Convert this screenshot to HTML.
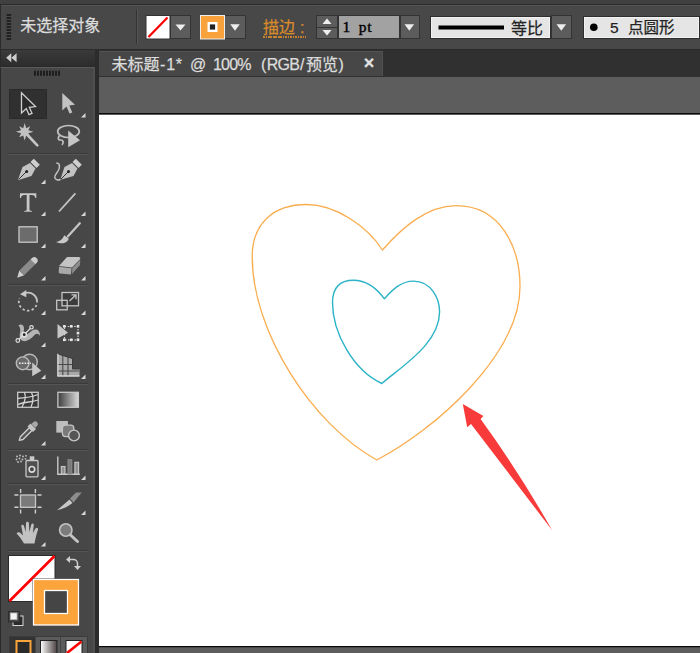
<!DOCTYPE html>
<html lang="zh-CN">
<head>
<meta charset="utf-8">
<title>未标题-1</title>
<style>
html,body{margin:0;padding:0;}
body{-webkit-text-stroke:0.25px;width:700px;height:653px;overflow:hidden;position:relative;background:#5d5d5d;font-family:"Liberation Sans","Noto Sans CJK SC",sans-serif;}
.abs{position:absolute;}
#topbar{left:0;top:0;width:700px;height:49px;background:#484848;}
#topstrip{left:0;top:0;width:700px;height:4px;background:#404040;border-bottom:1px solid #2b2b2b;}
#tophl{left:0;top:5px;width:700px;height:1px;background:#545454;}
#topleft{left:0;top:5px;width:1px;height:44px;background:#2b2b2b;}
#topline{left:0;top:49px;width:700px;height:2px;background:#2b2b2b;}
#tabbar{left:96px;top:50px;width:604px;height:27px;background:#303030;}
#tab{left:98.600px;top:51px;width:284.400px;height:25px;background:#474747;border-top:1px solid #525252;border-right:1px solid #505050;box-sizing:border-box;}
#tabtext{left:111.5px;top:55.300px;width:240px;height:20px;font-size:16px;line-height:20px;color:#dcdcdc;white-space:nowrap;}
#tabtext span{position:absolute;top:0;}
#tabclose{left:360.600px;top:53px;width:17px;font-size:18px;font-weight:bold;line-height:20px;color:#e2e2e2;text-align:center;}
#paste{left:98.600px;top:77px;width:602px;height:576px;background:#5d5d5d;}
#canvas{left:99px;top:115px;width:601px;height:531px;background:#fff;}
#cvtop{left:97px;top:113px;width:603px;height:1px;background:#0a0a0a;border-bottom:1px solid #5a5a5a;}
#cvleft{left:97px;top:113px;width:1px;height:535px;background:#0a0a0a;border-right:1px solid #6a6a6a;}
#cvbot{left:97px;top:646px;width:603px;height:1px;background:#0a0a0a;border-bottom:1px solid #484848;}
#gap{left:95px;top:50px;width:3.600px;height:603px;background:#2b2b2b;}
#tools{left:0;top:67px;width:95px;height:586px;background:#474747;border-left:1px solid #2a2a2a;border-right:2px solid #4f4f4f;border-top:1px solid #5a5a5a;box-sizing:border-box;}
#toolhead{left:0;top:50px;width:95px;height:17px;background:linear-gradient(#3a3a3a,#2e2e2e 85%,#292929);border-left:1px solid #2a2a2a;box-sizing:border-box;}
#sel{left:9px;top:89px;width:37.500px;height:29.500px;background:#303030;border:1px solid #2a2a2a;box-sizing:border-box;}
.sep{left:8px;width:80px;height:1px;background:#3a3a3a;border-bottom:1px solid #555;}
#nosel{left:20.300px;top:14.600px;font-size:16px;line-height:22px;color:#dcdcdc;white-space:nowrap;}
#miaobian{left:263px;top:17px;font-size:16px;line-height:22px;color:#d98a2b;white-space:nowrap;height:21px;word-spacing:0.5px;padding-right:2px;background:repeating-linear-gradient(90deg,#c9822c 0,#c9822c 1.500px,transparent 1.500px,transparent 2.500px) left bottom/100% 2px no-repeat;}
.btn{background:#5c5c5c;border:1px solid #333;box-sizing:border-box;}
#ptfield{left:338px;top:15px;width:62px;height:24px;background:#a2a2a2;border:1px solid #333;box-sizing:border-box;}
#pttext{left:342.500px;top:15.500px;font-family:"Liberation Serif","Noto Serif CJK SC",serif;font-size:15.500px;letter-spacing:0.700px;word-spacing:3.300px;-webkit-text-stroke:0.400px;line-height:22px;color:#000;white-space:pre;}
#profile{left:430px;top:16px;width:121px;height:23px;background:#e5e5e5;border:1px solid #2e2e2e;box-sizing:border-box;box-shadow:inset 0 0 0 1px #f2f2f2;}
#proftext{left:511px;top:17.500px;font-size:16px;line-height:22px;color:#222;white-space:nowrap;}
#brush{left:582.500px;top:16px;width:117px;height:23px;background:#e5e5e5;border:1px solid #2e2e2e;box-sizing:border-box;box-shadow:inset 0 0 0 1px #f2f2f2;}
#brushtext{left:610px;top:17.200px;font-size:15.5px;word-spacing:5px;line-height:22px;color:#222;white-space:pre;}
svg{position:absolute;left:0;top:0;}
</style>
</head>
<body>
<div class="abs" id="paste"></div>
<div class="abs" id="canvas"></div>
<div class="abs" id="cvtop"></div>
<div class="abs" id="cvbot"></div>
<div class="abs" id="cvleft"></div>
<div class="abs" id="topbar"></div>
<div class="abs" id="topstrip"></div>
<div class="abs" id="topline"></div>
<div class="abs" id="tophl"></div>
<div class="abs" id="topleft"></div>
<div class="abs" id="tabbar"></div>
<div class="abs" id="tab"></div>
<div class="abs" id="tabtext"><span style="left:0">未标题</span><span style="left:48.5px;letter-spacing:0.8px">-1*</span> <span style="left:78.500px">@</span> <span style="left:101.500px;letter-spacing:-0.8px">100%</span> <span style="left:149.500px">(</span><span style="left:155.300px;letter-spacing:-0.8px">RGB</span><span style="left:188.500px">/</span><span style="left:194.500px">预览</span><span style="left:227px">)</span></div>

<div class="abs" id="tabclose">×</div>
<div class="abs" id="gap"></div>
<div class="abs" id="tools"></div>
<div class="abs" id="toolhead"></div>
<div class="abs" id="sel"></div>
<div class="abs sep" style="top:153px"></div>
<div class="abs sep" style="top:284px"></div>
<div class="abs sep" style="top:383px"></div>
<div class="abs sep" style="top:449px"></div>
<div class="abs sep" style="top:483px"></div>
<div class="abs sep" style="top:550px"></div>

<div class="abs" id="nosel">未选择对象</div>
<div class="abs btn" style="left:170px;top:15px;width:21px;height:24px;"></div>
<div class="abs btn" style="left:224px;top:15px;width:22px;height:24px;"></div>
<div class="abs" id="miaobian">描边 :</div>
<div class="abs btn" style="left:316px;top:15px;width:22px;height:24px;"></div>
<div class="abs" id="ptfield"></div>
<div class="abs" id="pttext">1 pt</div>
<div class="abs btn" style="left:400px;top:15px;width:20px;height:24px;"></div>
<div class="abs" id="profile"></div>
<div class="abs" id="proftext">等比</div>
<div class="abs btn" style="left:551px;top:15px;width:21px;height:24px;"></div>
<div class="abs" id="brush"></div>
<div class="abs" id="brushtext">5 点圆形</div>

<svg width="700" height="653" viewBox="0 0 700 653">
<defs>
<linearGradient id="gradtool" x1="0" x2="1" y1="0" y2="0"><stop offset="0" stop-color="#3c3c3c"/><stop offset="1" stop-color="#d8d8d8"/></linearGradient>
<linearGradient id="gradbtn" x1="0" x2="1" y1="0" y2="0"><stop offset="0" stop-color="#fff"/><stop offset="1" stop-color="#4a4040"/></linearGradient>
</defs>
<!-- hearts -->
<path d="M382.4 250.0 C400.5 229.5 425.9 205.6 456.1 205.6 C500.6 205.6 520.0 247.3 520.0 286.4 C520.0 355.5 433.8 430.3 376.8 460.0 C312.4 424.6 252.2 332.2 252.2 256.6 C252.2 223.6 273.2 204.5 306.6 204.5 C335.7 204.5 367.6 226.6 382.4 250.0 Z" fill="none" stroke="#f9ad4e" stroke-width="1.3" stroke-linejoin="round"/>
<path d="M384.4 298.8 C392.1 290.0 400.9 281.1 413.6 281.1 C431.3 281.1 439.6 299.0 439.6 311.7 C439.6 343.2 402.7 365.6 381.8 383.5 C353.7 370.4 332.5 333.3 332.5 302.5 C332.5 290.3 337 280.2 353.6 280.2 C367.0 280.2 377.0 288.7 384.4 298.8 Z" fill="none" stroke="#2bb3c6" stroke-width="1.4" stroke-linejoin="round"/>
<!-- arrow -->
<path d="M462.800 403.900 L483.400 416.100 L480.600 419 Q519.500 472.500 552.100 530.300 L471 423.900 L467.200 427.200 Z" fill="#f83a3a"/>
<!-- top bar -->
<g>
<rect x="7" y="8" width="4" height="32" fill="none"/>
<path d="M8.800 14v27" stroke="#222" stroke-width="4.600" stroke-dasharray="2 1"/>
<path d="M136.5 10V44" stroke="#333" stroke-width="1"/>
<path d="M137.5 10V44" stroke="#555" stroke-width="1"/>
<rect x="146" y="15.5" width="24" height="23.5" fill="#fff" stroke="#333" stroke-width="1"/>
<path d="M148.5 37 L167.5 17.5" stroke="#f00" stroke-width="2.2"/>
<path d="M175.5 24.5h10l-5 6z" fill="#eee"/>
<rect x="200.5" y="15.500" width="24" height="23.5" fill="#f9a13a" stroke="#eee" stroke-width="1"/>
<rect x="208.700" y="23.200" width="7.600" height="7.600" fill="#222" stroke="#fff" stroke-width="2.400"/>
<path d="M230.200 24.300h9.600l-4.800 6.500z" fill="#eee"/>
<path d="M322.500 24l4.500-5.500 4.500 5.500z" fill="#eee"/>
<path d="M322.500 30l4.500 5.500 4.500-5.500z" fill="#eee"/>
<path d="M316 27.500h22" stroke="#333" stroke-width="1"/>
<path d="M404.500 24.300h9.600l-4.800 6.500z" fill="#eee"/>
<path d="M438.500 27.500h65.500" stroke="#000" stroke-width="3.800"/>
<path d="M556.500 24.300h9.600l-4.800 6.500z" fill="#eee"/>
<circle cx="593.800" cy="27.300" r="3.800" fill="#000"/>
</g>
<!-- toolbar header -->
<path d="M11.300 53.300v9l-5.200-4.500z M16.600 53.300v9l-5.200-4.500z" fill="#cdcdcd"/>
<path d="M34 73.200h27" stroke="#1e1e1e" stroke-width="5" stroke-dasharray="2 1"/>
<!-- TOOLBAR ICONS -->
<g id="toolicons">
<!-- small flyout triangles -->
<g fill="#d8d8d8">
<path d="M85.500 113v4.500h-4.500z"/>
<path d="M45.500 179.500v4.500h-4.500z"/><path d="M45.500 211.500v4.500h-4.500z"/><path d="M85.500 211.500v4.500h-4.500z"/>
<path d="M45.500 243.500v4.500h-4.500z"/><path d="M85.500 243.500v4.500h-4.500z"/>
<path d="M45.500 276v4.500h-4.500z"/><path d="M85.500 276v4.500h-4.500z"/>
<path d="M45.500 310.500v4.500h-4.500z"/><path d="M85.500 310.500v4.500h-4.500z"/>
<path d="M45.500 342.500v4.500h-4.500z"/>
<path d="M45.500 374.500v4.500h-4.500z"/><path d="M85.500 374.500v4.500h-4.500z"/>
<path d="M45.500 441v4.500h-4.500z"/>
<path d="M45.500 475.500v4.500h-4.500z"/><path d="M85.500 475.500v4.500h-4.500z"/>
<path d="M85.500 510.500v4.500h-4.500z"/>
<path d="M45.500 542v4.500h-4.500z"/>
</g>
<!-- selection tool -->
<path d="M21.500 92.800 L21.500 113 L26.300 108.600 L29 114.600 L32 113.300 L29.300 107.300 L35.500 106.600 Z" fill="#2a2a2a" stroke="#d0d0d0" stroke-width="1.300" stroke-linejoin="miter"/>
<!-- direct selection -->
<path d="M62.300 93 L62.300 110.500 L66.500 106.500 L69.500 113.600 L72.300 112.400 L69.300 105.400 L75 104.800 Z" fill="#c2c2c2"/>
<!-- magic wand -->
<path d="M24.7 123.0 L26.2 128.2 L30.2 126.3 L28.3 130.3 L33.5 131.8 L28.3 133.3 L30.2 137.3 L26.2 135.4 L24.7 140.6 L23.2 135.4 L19.2 137.3 L21.1 133.3 L15.9 131.8 L21.1 130.3 L19.2 126.3 L23.2 128.2 Z" fill="#c2c2c2"/>
<path d="M27.500 135 L37.300 145.300" stroke="#c6c6c6" stroke-width="2.600" stroke-linecap="round"/>
<!-- lasso -->
<g fill="none" stroke="#c0c0c0" stroke-width="1.700">
<ellipse cx="68.500" cy="131.500" rx="10.800" ry="6"/>
<path d="M59.500 135.500 c-2 2.500 -1.500 4.500 1 4.500 c3 0 3.500 2.500 1.500 5"/>
</g>
<path d="M68.200 130.500 L68.200 147.200 L80 140.300 Z" fill="#c6c6c6"/>
<!-- pen -->
<g id="pen">
<path d="M17.800 180.300 L22.500 167 L30 163 L35.500 168.500 L31.500 176 Z" fill="#c2c2c2"/>
<path d="M30.500 162 L33.800 158.700 L39.800 164.700 L36.500 168 Z" fill="#cfcfcf"/>
<path d="M18.500 179.500 L26 172" stroke="#333" stroke-width="1"/>
<circle cx="26.700" cy="171.500" r="1.500" fill="#222"/>
</g>
<!-- curvature pen -->
<g>
<path d="M60.300 179.800 L64.500 167 L72 163 L77.500 168.500 L73.500 176 Z" fill="#c2c2c2"/>
<path d="M72.500 162 L75.800 158.700 L81.800 164.700 L78.500 168 Z" fill="#cfcfcf"/>
<path d="M61 179 L68 172" stroke="#333" stroke-width="1"/>
<circle cx="68.500" cy="171.500" r="1.500" fill="#222"/>
<path d="M56.300 163 c3 0 3.500 2 3 5 c-0.600 4 -5 6 -4.500 9.500 c0.400 2.500 3.500 3 5.500 2" fill="none" stroke="#c2c2c2" stroke-width="1.500"/>
</g>
<!-- type T -->
<path d="M20 193.300h16.300v4.700h-1c-0.500-2.300-1.300-3-3.500-3h-2.300v14.500c0 1 0.600 1.300 2.500 1.400v0.900h-7.800v-0.900c1.900-0.100 2.500-0.400 2.500-1.400v-14.500h-2.300c-2.200 0-3 0.700-3.500 3h-1z" fill="#c8c8c8"/>
<!-- line -->
<path d="M59 211.500 L75.400 193.300" stroke="#c4c4c4" stroke-width="1.800"/>
<!-- rectangle -->
<rect x="19" y="226.800" width="18.200" height="15.400" fill="#6c6c6c" stroke="#c8c8c8" stroke-width="1.300"/>
<!-- brush -->
<path d="M79.800 223.300 L68 236.300" stroke="#c4c4c4" stroke-width="2.300" stroke-linecap="round"/>
<path d="M56 242 c4 -0.500 6.500 -2.800 8.300 -6.800 l4.400 3.300 c-0.800 4.200 -6.500 6.300 -12.700 3.500z" fill="#c8c8c8"/>
<!-- pencil -->
<path d="M17.200 277.800 L19.300 270.600 L24.200 275.300 Z" fill="#cfcfcf"/>
<path d="M19.300 270.600 L30.500 259.500 L35.300 264.300 L24.200 275.300 Z" fill="#8a8a8a"/>
<path d="M30.500 259.500 L32 258 a3.400 3.400 0 0 1 4.800 4.800 L35.300 264.300 Z" fill="#cdcdcd"/>
<!-- eraser -->
<path d="M59 266 L67 257 L79 257 a1.500 1.500 0 0 1 1.200 2 L72 267.500 Z" fill="#c4c4c4"/>
<path d="M59 266.800 L71.500 268.300 L71 274.500 L60 273.600 a1.500 1.500 0 0 1 -1.300 -1.600 Z" fill="#a8a8a8"/>
<path d="M72.300 268 L80.200 259.800 L80 265 L72 274 Z" fill="#8c8c8c"/>
<!-- rotate -->
<g fill="none" stroke="#c4c4c4" stroke-width="1.800">
<path d="M25.500 293 A9 9 0 0 1 37 302.500"/>
<path d="M36.500 305 A9 9 0 1 1 19.500 298" stroke-dasharray="2.400 2.300"/>
</g>
<path d="M20 294.300 L26.300 290 L26.300 297.200 Z" fill="#c8c8c8"/>
<!-- scale -->
<g fill="none" stroke="#c4c4c4" stroke-width="1.300">
<rect x="62" y="292.500" width="16.500" height="13.300" fill="#3c3c3c"/>
<rect x="56.700" y="300.300" width="10.500" height="9.500"/>
<path d="M69.500 301 L75.800 295 M71.500 294.800 h4.500 v4.500"/>
</g>
<!-- warp/width tool -->
<path d="M18.500 325.500 c2.500 -2 5.500 -0.500 5.500 3 c0 2 -0.800 4 0.300 5.300 c1.700 2 4.700 -0.800 7.200 -2.800 c3.500 -2.800 8.800 -1.500 8.500 4.800 c-1.500 -2.300 -3.500 -2.800 -5.200 -1 c-2.800 3 -6.800 6.800 -11.300 6.300 c-3.500 -0.500 -4.300 -4.500 -3.600 -7.800 c0.600 -3 0.800 -5.500 -1.400 -7.800z" fill="#b4b4b4"/>
<g stroke="#e0e0e0" stroke-width="1.200" fill="#444">
<path d="M18 340.300 L31.500 327.500"/>
<circle cx="17.800" cy="340.500" r="1.800"/>
<circle cx="31.500" cy="327.300" r="1.700"/>
<circle cx="24.200" cy="334.700" r="2.200" fill="#222" stroke-width="1.600"/>
</g>
<!-- free transform -->
<path d="M57.500 324 L57.500 338.500 L68 332.800 Z" fill="#c6c6c6"/>
<rect x="64.500" y="326.500" width="13.500" height="13.300" fill="none" stroke="#d0d0d0" stroke-width="1.200" stroke-dasharray="1.600 1.600"/>
<g fill="#e6e6e6">
<rect x="63" y="325" width="2.600" height="2.600"/><rect x="70" y="325" width="2.600" height="2.600"/><rect x="76.700" y="325" width="2.600" height="2.600"/>
<rect x="76.700" y="331.800" width="2.600" height="2.600"/>
<rect x="63" y="338.500" width="2.600" height="2.600"/><rect x="70" y="338.500" width="2.600" height="2.600"/><rect x="76.700" y="338.500" width="2.600" height="2.600"/>
</g>
<!-- shape builder -->
<g fill="#6a6a6a" stroke="#b8b8b8" stroke-width="1.400">
<circle cx="29.500" cy="362" r="7.800" fill="#585858"/>
<circle cx="22.700" cy="363.300" r="6.400"/>
</g>
<path d="M19 363.300 h12" stroke="#f0f0f0" stroke-width="1.600" stroke-dasharray="1.600 1.200"/>
<path d="M32.200 362.500 L32.200 376.300 L41.300 370.700 Z" fill="#c6c6c6"/>
<!-- perspective grid -->
<g>
<path d="M57.300 353.800 L72.500 358.500 L72.500 369 L79.500 369 L79.500 376 L57.300 376 Z" fill="#a8a8a8"/>
<path d="M62.800 355.500v20.500M68 357v19M57.300 364.500h15.200M57.300 371h22" stroke="#484848" stroke-width="1.100"/>
<path d="M57.300 353.800 L72.500 358.500 L72.500 369 L79.500 369" fill="none" stroke="#3a3a3a" stroke-width="1"/>
<path d="M57.900 353.800v22.200h21.600" fill="none" stroke="#d8d8d8" stroke-width="1.300"/>
</g>
<!-- mesh -->
<rect x="17.700" y="392.300" width="20.500" height="15" fill="#3a3a3a" stroke="#c8c8c8" stroke-width="1.300"/>
<g fill="none" stroke="#d4d4d4" stroke-width="1.300">
<path d="M18 398.500 c6 -1 13 -1 20 -4"/>
<path d="M18 404.500 c7 -3 14 -2 20 -4.500"/>
<path d="M24.500 392.500 c2 5 0 10 -2.500 14.500"/>
<path d="M31.500 392.500 c2.500 5 1.500 10 -0.500 14.500"/>
</g>
<!-- gradient -->
<rect x="57.900" y="392.300" width="20.500" height="15" fill="url(#gradtool)" stroke="#c8c8c8" stroke-width="1.300"/>
<!-- eyedropper -->
<path d="M19.300 440.300 L20.300 436.800 L29.300 427.800 L32 430.500 L23 439.500 Z" fill="#555" stroke="#cfcfcf" stroke-width="1.300" stroke-linejoin="round"/>
<path d="M27.500 426.500 L30.500 423.500 L36 429 L33 432 Z" fill="#c4c4c4"/>
<path d="M31.500 424 L33.500 422 a2.700 2.700 0 0 1 3.800 3.800 L35.300 427.800 Z" fill="#a8a8a8"/>
<!-- blend -->
<rect x="56.300" y="421" width="11.600" height="11.600" fill="#bdbdbd"/>
<rect x="62.400" y="425.200" width="11.400" height="11.400" rx="3" fill="#7a7a7a" stroke="#c4c4c4" stroke-width="1.300"/>
<circle cx="74" cy="435.500" r="5.400" fill="#555" stroke="#c8c8c8" stroke-width="1.400"/>
<!-- symbol sprayer -->
<rect x="26" y="460.500" width="12" height="16.300" rx="1" fill="#4e4e4e" stroke="#c8c8c8" stroke-width="1.300"/>
<rect x="29.700" y="456.300" width="4.600" height="4" fill="#c8c8c8"/>
<circle cx="31.900" cy="469.300" r="2.800" fill="#444" stroke="#d8d8d8" stroke-width="1.600"/>
<g fill="#c4c4c4">
<circle cx="17" cy="456.500" r="0.900"/><circle cx="20" cy="455.500" r="0.900"/><circle cx="23" cy="456.500" r="0.900"/><circle cx="26" cy="455.800" r="0.900"/>
<circle cx="16.500" cy="459.500" r="0.900"/><circle cx="19.500" cy="458.500" r="0.900"/><circle cx="22.500" cy="459.500" r="0.900"/><circle cx="25.500" cy="458.800" r="0.900"/>
<circle cx="18" cy="462" r="0.900"/><circle cx="21" cy="461.500" r="0.900"/>
</g>
<!-- graph -->
<path d="M57.800 456.500V474.300H79.800" fill="none" stroke="#c8c8c8" stroke-width="1.400"/>
<rect x="61.300" y="466.500" width="3.700" height="7.500" fill="#909090" stroke="#c8c8c8" stroke-width="1.100"/>
<rect x="68" y="459.800" width="3.700" height="14.200" fill="#7a7a7a" stroke="#8a8a8a" stroke-width="1.100"/>
<rect x="74.900" y="462.300" width="3.700" height="11.700" fill="#909090" stroke="#c8c8c8" stroke-width="1.100"/>
<!-- artboard -->
<rect x="20.500" y="495" width="15" height="12.300" fill="#7a7a7a" stroke="#c8c8c8" stroke-width="1.300"/>
<path d="M20.600 489v4M35.400 489v4M20.600 509.500v4M35.400 509.500v4M14.400 495h4M14.400 507.200h4M37.500 495h4M37.500 507.200h4" stroke="#d0d0d0" stroke-width="1.400"/>
<!-- slice -->
<path d="M57 510.300 L69.500 499.500 L72.500 503 C68 506.500 63 509 57 510.300 Z" fill="#c8c8c8"/>
<path d="M70 498.500 L76 492.500 L81.700 492.500 L73.500 502.500 Z" fill="#8e8e8e"/>
<!-- hand -->
<path d="M24 543.500 C21.500 539 19 536 16.600 533.500 C17.500 531.800 19.500 532 21 533.500 L23 535.500 L21.300 526 C21.300 524.300 23.500 524.300 24 526 L25.600 532 L26 523 C26.300 521.200 28.600 521.200 28.900 523 L29.300 532 L31.300 524.500 C31.800 522.800 34 523.300 33.800 525 L32.800 533 L35.500 528.500 C36.500 527 38.600 528 38 529.800 C36.500 534 35.500 538.500 34.500 543.500 Z" fill="#c2c2c2"/>
<!-- zoom -->
<circle cx="65.800" cy="530" r="6.200" fill="#7c7c7c" stroke="#c4c4c4" stroke-width="1.600"/>
<path d="M70.500 535 L77.500 541.500" stroke="#c4c4c4" stroke-width="3" stroke-linecap="round"/>
</g>
<!-- FILL / STROKE -->
<g id="fillstroke">
<rect x="8.500" y="555.500" width="46.500" height="46" fill="#fff" stroke="#2a2a2a" stroke-width="1"/>
<path d="M9.500 601 L54.500 556" stroke="#f00" stroke-width="2.600"/>
<rect x="32.500" y="578.500" width="47" height="47.500" fill="#3a3a3a"/>
<rect x="33.500" y="579.500" width="45" height="45.500" fill="#fca43c" stroke="#fff" stroke-width="1.300"/>
<rect x="44.500" y="590.500" width="23" height="23" fill="#454545" stroke="#fff" stroke-width="1.300"/>
<!-- swap -->
<g fill="none" stroke="#cfcfcf" stroke-width="1.500">
<path d="M68.500 559.500 h5 a4 4 0 0 1 4 4 v4"/>
</g>
<path d="M66 559.500 l4 -3.500 v7z M77.500 570 l-3.500 -4 h7z" fill="#cfcfcf"/>
<!-- default -->
<rect x="13" y="616" width="10" height="9.500" fill="#2a2a2a" stroke="#d8d8d8" stroke-width="1"/>
<rect x="8.500" y="611.500" width="11" height="10.500" fill="#484848" stroke="#2e2e2e" stroke-width="1"/>
<rect x="10.500" y="613" width="6.500" height="6.500" fill="#f4f4f4" stroke="#bbb" stroke-width="0.800"/>
<!-- bottom buttons -->
<rect x="9.500" y="636.500" width="78" height="17" fill="#5c5c5c" stroke="#3a3a3a" stroke-width="1"/>
<rect x="10" y="637" width="25" height="16" fill="#333"/>
<path d="M35.500 637v16M60.500 637v16" stroke="#444" stroke-width="1"/>
<rect x="16.500" y="641" width="14" height="14" fill="#2a2a2a" stroke="#fca43c" stroke-width="2"/>
<rect x="40.500" y="640.500" width="16.500" height="14" fill="url(#gradbtn)" stroke="#222" stroke-width="1"/>
<rect x="66" y="640.500" width="16" height="14" fill="#fff" stroke="#222" stroke-width="1"/>
<path d="M67 653 L81.500 641.500" stroke="#f00" stroke-width="2.600"/>
</g>
</svg>
</body>
</html>
